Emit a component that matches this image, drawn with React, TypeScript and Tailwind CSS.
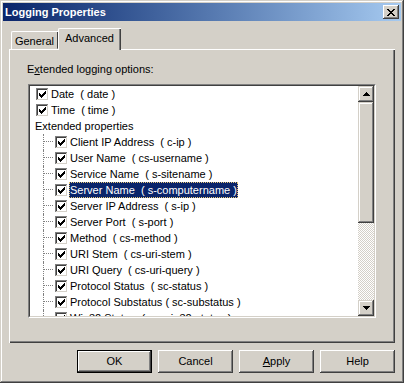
import React from 'react';

const raised =
  'shadow-[inset_-1px_-1px_#404040,inset_1px_1px_#ffffff,inset_-2px_-2px_#808080,inset_2px_2px_#d4d0c8]';
const raisedBar =
  'shadow-[inset_-1px_-1px_#404040,inset_1px_1px_#d4d0c8,inset_-2px_-2px_#808080,inset_2px_2px_#ffffff]';

function CheckBox() {
  return (
    <svg width="13" height="13" viewBox="0 0 13 13" shapeRendering="crispEdges" className="shrink-0">
      <rect x="0" y="0" width="13" height="13" fill="#ffffff" />
      <path d="M0 0h12v1h-12z M0 0h1v12h-1z" fill="#808080" />
      <path d="M1 1h10v1h-10z M1 1h1v10h-1z" fill="#404040" />
      <path d="M1 11h11v1h-11z M11 1h1v11h-1z" fill="#d4d0c8" />
      <path
        d="M3 5h1v3h-1z M4 6h1v3h-1z M5 7h1v3h-1z M6 6h1v3h-1z M7 5h1v3h-1z M8 4h1v3h-1z M9 3h1v3h-1z"
        fill="#000000"
      />
    </svg>
  );
}

function Arrow({ down }: { down?: boolean }) {
  return (
    <svg width="7" height="4" viewBox="0 0 7 4" shapeRendering="crispEdges">
      <path
        d={down ? 'M0 0h7v1h-7z M1 1h5v1h-5z M2 2h3v1h-3z M3 3h1v1h-1z' : 'M3 0h1v1h-1z M2 1h3v1h-3z M1 2h5v1h-5z M0 3h7v1h-7z'}
        fill="#000000"
      />
    </svg>
  );
}

const rootItems = ['Date  ( date )', 'Time  ( time )'];

const childItems = [
  'Client IP Address  ( c-ip )',
  'User Name  ( cs-username )',
  'Service Name  ( s-sitename )',
  'Server Name  ( s-computername )',
  'Server IP Address  ( s-ip )',
  'Server Port  ( s-port )',
  'Method  ( cs-method )',
  'URI Stem  ( cs-uri-stem )',
  'URI Query  ( cs-uri-query )',
  'Protocol Status  ( sc-status )',
  'Protocol Substatus ( sc-substatus )',
  'Win32 Status  ( sc-win32-status )',
];

function Button({ label, def, mnemonic }: { label: string; def?: boolean; mnemonic?: boolean }) {
  const inner = (
    <div className={`flex h-full w-full items-center justify-center ${raised}`}>
      {mnemonic ? (
        <span>
          <span className="underline underline-offset-1">{label[0]}</span>
          {label.slice(1)}
        </span>
      ) : (
        label
      )}
    </div>
  );
  return (
    <div className={`h-[23px] w-[75px] ${def ? 'border border-black' : ''}`}>{inner}</div>
  );
}

export default function App() {
  return (
    <div
      className={`flex h-[383px] w-[404px] flex-col bg-[#d4d0c8] p-[3px] font-['Liberation_Sans',Arial,sans-serif] text-[11px] text-black ${raisedBar}`}
    >
      {/* title bar */}
      <div className="flex h-[18px] items-center justify-between bg-gradient-to-r from-[#0a246a] to-[#a6caf0] pl-[2px] pr-[2px]">
        <span className="font-bold text-white">Logging Properties</span>
        <div className={`flex h-[14px] w-[16px] items-center justify-center bg-[#d4d0c8] ${raised}`}>
          <svg width="8" height="7" viewBox="0 0 8 7" shapeRendering="crispEdges">
            <path
              d="M0 0h2v1h-2z M6 0h2v1h-2z M1 1h2v1h-2z M5 1h2v1h-2z M2 2h4v1h-4z M3 3h2v1h-2z M2 4h4v1h-4z M1 5h2v1h-2z M5 5h2v1h-2z M0 6h2v1h-2z M6 6h2v1h-2z"
              fill="#000000"
            />
          </svg>
        </div>
      </div>

      <div className="flex flex-1 flex-col px-[6px] pt-[7px]">
        {/* tabs */}
        <div className="flex h-[21px] items-end pl-[2px]">
          <div className="flex h-[18px] w-[47px] items-center justify-center rounded-tl-[2px] border-l border-t border-white pb-[1px] shadow-[inset_-1px_0_#808080]">
            <div className="flex h-full w-full items-center justify-center border-r border-[#404040] pt-[2px]">
              General
            </div>
          </div>
          <div className="relative z-10 mb-[-1px] flex h-[22px] w-[63px] rounded-tl-[2px] border-l border-t border-white bg-[#d4d0c8]">
            <div className="flex h-full w-full items-center justify-center border-r border-[#404040] pb-[3px] shadow-[inset_-1px_0_#808080]">
              Advanced
            </div>
          </div>
        </div>

        {/* panel */}
        <div className="flex h-[294px] flex-col border-l border-t border-white">
          <div className="flex min-h-0 flex-1 flex-col border-b border-r border-[#404040]">
            <div className="flex min-h-0 flex-1 flex-col border-b border-r border-[#808080] pl-[17px] pr-[17px] pt-[12px]">
              <div className="h-[14px] leading-[14px]">
                E<span className="underline underline-offset-1">x</span>tended logging options:
              </div>
              <div className="mt-[8px] ml-[1px] flex h-[234px] shrink-0 flex-col border-b border-l border-r border-t border-[#808080] border-b-white border-r-white">
                <div className="flex min-h-0 flex-1 overflow-hidden border-b border-l border-r border-t border-[#404040] border-b-[#d4d0c8] border-r-[#d4d0c8] bg-white">
                  <div className="min-h-0 flex-1 overflow-hidden leading-[16px]">
                    {rootItems.map((t) => (
                      <div key={t} className="flex h-[16px] items-center pl-[6px]">
                        <CheckBox />
                        <span className="ml-[1px] whitespace-pre px-[1px]">{t}</span>
                      </div>
                    ))}
                    <div className="flex h-[16px] items-center pl-[5px]">Extended properties</div>
                    {childItems.map((t, i) => (
                      <div key={t} className="flex h-[16px] items-center pl-[13px]">
                        <div className="h-full w-[10px] shrink-0 border-l border-dotted border-[#808080]">
                          <div className="h-[8px] border-b border-dotted border-[#808080]" />
                        </div>
                        <div className="ml-[2px]">
                          <CheckBox />
                        </div>
                        <span
                          className={`ml-[1px] whitespace-pre px-[1px] ${
                            i === 3 ? 'bg-[#0a246a] text-white outline outline-1 -outline-offset-1 outline-dotted outline-[#e8c878]' : ''
                          }`}
                        >
                          {t}
                        </span>
                      </div>
                    ))}
                  </div>

                  {/* scrollbar */}
                  <div className="flex w-[16px] flex-col">
                    <div className={`flex h-[16px] shrink-0 items-center justify-center bg-[#d4d0c8] ${raisedBar}`}>
                      <Arrow />
                    </div>
                    <div className={`h-[121px] shrink-0 bg-[#d4d0c8] ${raisedBar}`} />
                    <div className="min-h-0 flex-1 bg-[repeating-conic-gradient(#d4d0c8_0_25%,#ffffff_0_50%)] bg-[length:2px_2px]" />
                    <div className={`flex h-[16px] shrink-0 items-center justify-center bg-[#d4d0c8] ${raisedBar}`}>
                      <Arrow down />
                    </div>
                  </div>
                </div>
              </div>
            </div>
          </div>
        </div>

        {/* buttons */}
        <div className="mt-[7px] flex justify-end gap-[6px]">
          <Button label="OK" def />
          <Button label="Cancel" />
          <Button label="Apply" mnemonic />
          <Button label="Help" />
        </div>
      </div>
    </div>
  );
}
